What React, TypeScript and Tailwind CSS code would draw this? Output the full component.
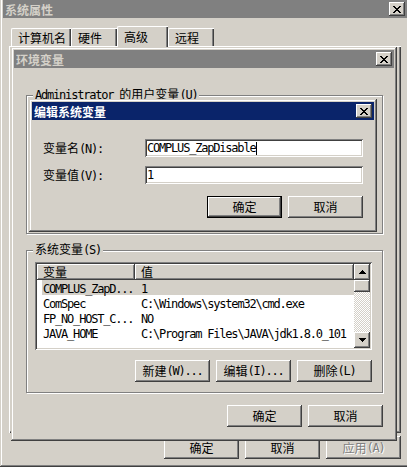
import React from 'react';

const CJK = /([\u3400-\u9fff]+)/;

// SimSun-like mix: CJK at 12px, latin in a narrow mono (6px advance)
const T = ({ s }: { s: string }) => (
  <>
    {s.split(CJK).filter(Boolean).map((part, i) =>
      CJK.test(part) ? (
        <span key={i} className="font-['Noto_Sans_CJK_SC',sans-serif] text-[12px]">{part}</span>
      ) : (
        <span key={i} className="font-['DejaVu_Sans_Mono',monospace] text-[12px] tracking-[-1.2px] whitespace-pre">{part}</span>
      )
    )}
  </>
);

const RAISED = 'bg-[#d4d0c8] shadow-[inset_-1px_-1px_#404040,inset_1px_1px_#ffffff,inset_-2px_-2px_#808080,inset_2px_2px_#d4d0c8]';
const WINDOW = 'bg-[#d4d0c8] shadow-[inset_-1px_-1px_#404040,inset_1px_1px_#d4d0c8,inset_-2px_-2px_#808080,inset_2px_2px_#ffffff]';
const SUNKEN = 'bg-white shadow-[inset_1px_1px_#808080,inset_-1px_-1px_#ffffff,inset_2px_2px_#404040,inset_-2px_-2px_#d4d0c8]';

const Pixels = ({ rows, w }: { rows: number[][]; w: number }) => (
  <svg width={w} height={rows.length} viewBox={`0 0 ${w} ${rows.length}`} shapeRendering="crispEdges">
    {rows.map((cols, y) => cols.map((x) => <rect key={`${x}-${y}`} x={x} y={y} width={1} height={1} fill="#000" />))}
  </svg>
);

const X_ROWS = [[0, 1, 6, 7], [1, 2, 5, 6], [2, 3, 4, 5], [3, 4], [2, 3, 4, 5], [1, 2, 5, 6], [0, 1, 6, 7]];
const UP_ROWS = [[3], [2, 3, 4], [1, 2, 3, 4, 5], [0, 1, 2, 3, 4, 5, 6]];
const DOWN_ROWS = [...UP_ROWS].reverse();

const CloseBtn = () => (
  <div className={`w-[16px] h-[14px] flex items-center justify-center ${RAISED}`}>
    <Pixels rows={X_ROWS} w={8} />
  </div>
);

const TitleBar = ({ title, active }: { title: string; active?: boolean }) => (
  <div className={`h-[18px] shrink-0 flex items-center justify-between pl-[2px] pr-[2px] ${active ? 'bg-[#0a246a] text-white' : 'bg-[#808080] text-[#d4d0c8]'}`}>
    <span className="font-bold leading-[14px]"><T s={title} /></span>
    <CloseBtn />
  </div>
);

const Btn = ({ label, className = '', def, disabled }: { label: string; className?: string; def?: boolean; disabled?: boolean }) => (
  <div className={`w-[75px] shrink-0 flex items-center justify-center leading-[14px] ${RAISED} ${def ? 'border border-black' : ''} ${disabled ? 'text-[#808080] [text-shadow:1px_1px_#ffffff]' : 'text-black'} ${className}`}>
    <T s={label} />
  </div>
);

const Group = ({ label, className = '', children }: { label: string; className?: string; children?: React.ReactNode }) => (
  <div className={`relative border border-[#808080] shadow-[inset_1px_1px_#ffffff,1px_1px_#ffffff] ${className}`}>
    <div className="absolute top-[-11px] left-[6px] px-[2px] bg-[#d4d0c8] leading-[16px]"><T s={label} /></div>
    {children}
  </div>
);

const Field = ({ label, value, caret }: { label: string; value: string; caret?: boolean }) => (
  <div className="flex items-center">
    <div className="w-[102px] leading-[14px]"><T s={label} /></div>
    <div className={`w-[218px] h-[18px] flex items-center pl-[2px] leading-[14px] ${SUNKEN}`}>
      <T s={value} />
      {caret && <span className="inline-block w-[1px] h-[13px] bg-black ml-[1px]" />}
    </div>
  </div>
);

const sysVars = [
  { name: 'COMPLUS_ZapD...', value: '1', selected: true },
  { name: 'ComSpec', value: 'C:\\Windows\\system32\\cmd.exe' },
  { name: 'FP_NO_HOST_C...', value: 'NO' },
  { name: 'JAVA_HOME', value: 'C:\\Program Files\\JAVA\\jdk1.8.0_101' },
];

const ListView = () => (
  <div className={`h-[88px] p-[2px] flex ${SUNKEN}`}>
    <div className="flex-1 flex flex-col overflow-hidden">
      <div className="flex h-[16px] shrink-0 leading-[14px]">
        <div className={`w-[98px] flex items-center pl-[6px] ${RAISED}`}><T s="变量" /></div>
        <div className={`flex-1 flex items-center pl-[6px] ${RAISED}`}><T s="值" /></div>
      </div>
      {sysVars.map((v) => (
        <div key={v.name} className={`ml-[5px] h-[15px] shrink-0 flex items-center leading-[14px] ${v.selected ? 'bg-[#d4d0c8]' : ''}`}>
          <div className="w-[99px] pl-[1px]"><T s={v.name} /></div>
          <div className="whitespace-nowrap"><T s={v.value} /></div>
        </div>
      ))}
    </div>
    <div className="w-[16px] flex flex-col">
      <div className={`h-[16px] flex items-center justify-center ${RAISED}`}><Pixels rows={UP_ROWS} w={7} /></div>
      <div className={`h-[12px] ${RAISED}`} />
      <div className="flex-1 bg-[repeating-conic-gradient(#d4d0c8_0%_25%,#ffffff_0%_50%)] bg-[length:2px_2px]" />
      <div className={`h-[16px] flex items-center justify-center ${RAISED}`}><Pixels rows={DOWN_ROWS} w={7} /></div>
    </div>
  </div>
);

const tabs = [
  { label: '计算机名', w: 'w-[60px]' },
  { label: '硬件', w: 'w-[46px]' },
  { label: '高级', w: 'w-[51px]', active: true },
  { label: '远程', w: 'w-[46px]' },
];

export default function App() {
  return (
    <div className="relative w-[407px] h-[467px] overflow-hidden bg-[#d4d0c8] text-black select-none">
      {/* 系统属性 */}
      <div className={`absolute left-0 top-[-3px] w-[410px] h-[470px] p-[3px] flex flex-col ${WINDOW}`}>
        <TitleBar title="系统属性" />
        <div className="flex h-[20px] mt-[8px] pl-[8px] items-start">
          {tabs.map((t) =>
            t.active ? (
              <div key={t.label} className={`relative z-10 ${t.w} h-[21px] pl-[6px] flex items-center bg-[#d4d0c8] border-l border-t border-white rounded-tl-[2px] shadow-[inset_-1px_0_#404040,inset_-2px_0_#808080] leading-[14px]`}>
                <T s={t.label} />
              </div>
            ) : (
              <div key={t.label} className={`${t.w} h-[18px] mt-[2px] pl-[6px] flex items-center bg-[#d4d0c8] border-l border-t border-white rounded-tl-[2px] shadow-[inset_-1px_0_#404040,inset_-2px_0_#808080] leading-[14px]`}>
                <T s={t.label} />
              </div>
            )
          )}
        </div>
        <div className="ml-[6px] w-[392px] h-[387px] shrink-0 bg-[#d4d0c8] shadow-[inset_1px_1px_#ffffff,inset_-1px_-1px_#404040,inset_-2px_-2px_#808080]" />
        <div className="flex justify-end gap-[6px] pr-[6px] mt-[3px]">
          <Btn label="确定" className="h-[23px]" />
          <Btn label="取消" className="h-[23px]" />
          <Btn label="应用(A)" className="h-[23px]" disabled />
        </div>
      </div>

      {/* 环境变量 */}
      <div className={`absolute left-[11px] top-[47px] w-[386px] h-[394px] p-[3px] flex flex-col ${WINDOW}`}>
        <TitleBar title="环境变量" />
        <div className="pl-[12px] flex flex-col w-[369px]">
          <Group label="Administrator 的用户变量(U)" className="mt-[27px] h-[139px]" />
          <Group label="系统变量(S)" className="mt-[16px] h-[143px] pt-[11px] pl-[8px] pr-[10px] flex flex-col">
            <ListView />
            <div className="flex justify-end gap-[6px] mt-[10px]">
              <Btn label="新建(W)..." className="h-[22px]" />
              <Btn label="编辑(I)..." className="h-[22px]" />
              <Btn label="删除(L)" className="h-[22px]" />
            </div>
          </Group>
          <div className="flex justify-end gap-[6px] mt-[12px] w-[357px]">
            <Btn label="确定" className="h-[22px]" />
            <Btn label="取消" className="h-[22px]" />
          </div>
        </div>
      </div>

      {/* 编辑系统变量 */}
      <div className={`absolute left-[29px] top-[99px] w-[348px] h-[133px] p-[3px] flex flex-col ${WINDOW}`}>
        <TitleBar title="编辑系统变量" active />
        <div className="pl-[11px] flex flex-col">
          <div className="mt-[19px]">
            <Field label="变量名(N):" value="COMPLUS_ZapDisable" caret />
          </div>
          <div className="mt-[9px]">
            <Field label="变量值(V):" value="1" />
          </div>
          <div className="flex justify-end gap-[6px] mt-[12px] w-[320px]">
            <Btn label="确定" className="h-[22px]" def />
            <Btn label="取消" className="h-[22px]" />
          </div>
        </div>
      </div>
    </div>
  );
}
